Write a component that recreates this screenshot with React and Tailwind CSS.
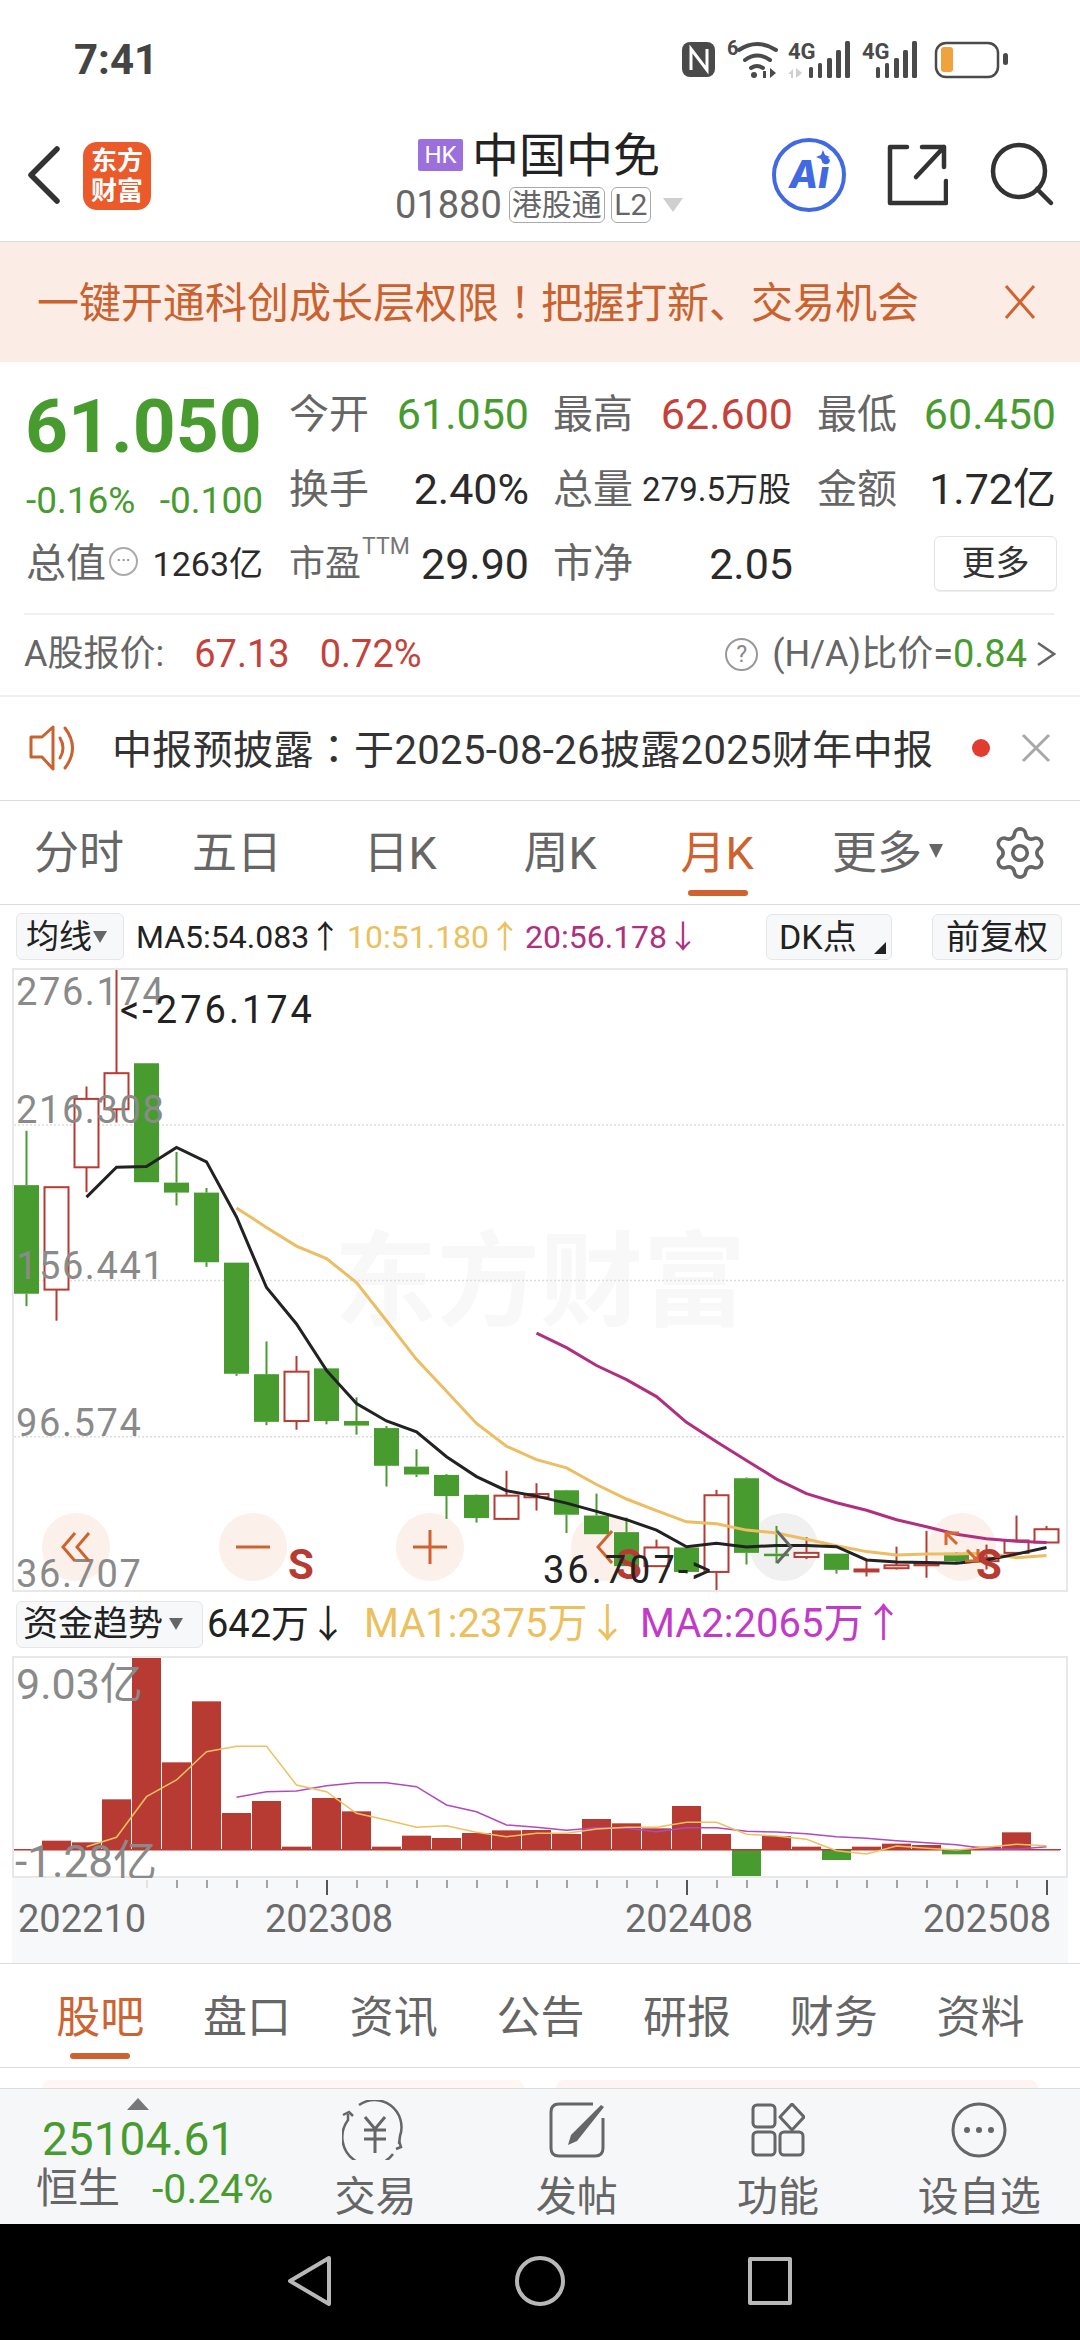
import { Settings } from 'lucide-react'

const RED = '#b83b33'
const GREEN = '#489c2f'

// candles read off the chart: [wick top, body top, body bottom, wick bottom, up?]
const candles = [
  [412, 543, 805, 835, 0], [548, 548, 795, 870, 1], [305, 335, 500, 560, 1], [20, 273, 360, 392, 1],
  [249, 249, 536, 536, 0], [463, 537, 561, 592, 0], [550, 561, 729, 740, 0], [730, 730, 998, 1003, 0],
  [920, 999, 1114, 1122, 0], [955, 993, 1112, 1133, 1], [985, 985, 1112, 1120, 0], [1055, 1112, 1123, 1145, 0],
  [1124, 1129, 1220, 1270, 0], [1180, 1222, 1241, 1247, 0], [1240, 1242, 1293, 1348, 0], [1289, 1290, 1346, 1357, 0],
  [1232, 1292, 1348, 1350, 1], [1262, 1288, 1296, 1328, 1], [1278, 1279, 1338, 1382, 0], [1287, 1340, 1385, 1385, 0],
  [1345, 1380, 1462, 1462, 0], [1398, 1417, 1462, 1462, 1], [1417, 1417, 1476, 1480, 0], [1278, 1291, 1476, 1525, 1],
  [1248, 1250, 1430, 1458, 0], [1365, 1432, 1438, 1455, 0], [1392, 1430, 1440, 1445, 1], [1432, 1432, 1471, 1480, 0],
  [1445, 1470, 1474, 1487, 1], [1415, 1460, 1467, 1470, 1], [1377, 1455, 1460, 1490, 1], [1428, 1430, 1450, 1452, 0],
  [1410, 1442, 1450, 1470, 1], [1340, 1400, 1430, 1430, 1], [1365, 1373, 1405, 1405, 1],
]

const ma5 = [[2, 572], [3, 500], [4, 498], [5, 452], [6, 487], [7, 620], [8, 790], [9, 878], [10, 990], [11, 1070], [12, 1112], [13, 1138], [14, 1198], [15, 1246], [16, 1280], [17, 1293], [18, 1310], [19, 1330], [20, 1350], [21, 1375], [22, 1415], [23, 1407], [24, 1416], [25, 1412], [26, 1412], [27, 1415], [28, 1447], [29, 1452], [30, 1453], [31, 1455], [32, 1447], [33, 1433], [34, 1417]]
const ma10 = [[7, 598], [8, 645], [9, 690], [10, 720], [11, 778], [12, 870], [13, 963], [14, 1040], [15, 1118], [16, 1173], [17, 1205], [18, 1225], [19, 1265], [20, 1300], [21, 1328], [22, 1355], [23, 1360], [24, 1375], [25, 1382], [26, 1397], [27, 1413], [28, 1427], [29, 1435], [30, 1433], [31, 1433], [32, 1430], [33, 1442], [34, 1436]]
const ma20 = [[17, 900], [18, 935], [19, 978], [20, 1012], [21, 1053], [22, 1115], [23, 1162], [24, 1207], [25, 1252], [26, 1287], [27, 1309], [28, 1327], [29, 1350], [30, 1367], [31, 1385], [32, 1396], [33, 1402], [34, 1405]]

const flowTops = [777, 752, 757, 628, 197, 517, 334, 669, 633, 770, 624, 664, 770, 737, 744, 729, 721, 720, 732, 687, 700, 715, 648, 732, 863, 738, 770, 810, 770, 761, 765, 793, 770, 727, 777]
const flowMa1 = [[2, 770], [3, 742], [4, 620], [5, 570], [6, 485], [7, 469], [8, 469], [9, 585], [10, 605], [11, 670], [12, 690], [13, 712], [14, 707], [15, 727], [16, 740], [17, 730], [18, 730], [19, 717], [20, 712], [21, 712], [22, 697], [23, 697], [24, 733], [25, 738], [26, 748], [27, 782], [28, 792], [29, 768], [30, 775], [31, 780], [32, 772], [33, 763], [34, 767]]
const flowMa2 = [[7, 622], [8, 605], [9, 603], [10, 587], [11, 578], [12, 578], [13, 590], [14, 645], [15, 665], [16, 705], [17, 712], [18, 721], [19, 713], [20, 715], [21, 725], [22, 713], [23, 713], [24, 724], [25, 726], [26, 731], [27, 740], [28, 745], [29, 752], [30, 758], [31, 764], [32, 776], [33, 778], [34, 770]]

const cx = (i) => 26.5 + 30 * i
const y1 = (z) => 960 + z / 2.412
const y2 = (z) => 1590 + z / 3
const linePts = (pts, fy) => pts.map(([i, z]) => `${cx(i)},${fy(z).toFixed(1)}`).join(' ')

const StatusIcons = () => (
  <svg width="350" height="60" viewBox="0 0 350 60" className="block">
    <rect x="12" y="12" width="33" height="35" rx="8" fill="#4a4a4a" />
    <path d="M21 40V19L37 40V19" fill="none" stroke="#fff" strokeWidth="3" />
    <text x="57" y="25" fontSize="20" fontWeight="700" fill="#4a4a4a">6</text>
    <g fill="none" stroke="#4a4a4a" strokeWidth="4" strokeLinecap="round">
      <path d="M69 20Q87 8 106 20" />
      <path d="M75 30Q87 21 100 30" />
      <path d="M81 38Q87 34 93 38" />
    </g>
    <circle cx="84" cy="45" r="3" fill="#4a4a4a" />
    <path d="M93 41h3v7h-3zM100 38l6 5-6 5z" fill="#4a4a4a" />
    <text x="118" y="29" fontSize="22" fontWeight="700" fill="#4a4a4a">4G</text>
    <path d="M118 44l5-5v9h-2v-4zM126 38l6 5-6 5z" fill="#cfcfcf" />
    <g fill="#4a4a4a">
      <rect x="139" y="37" width="4" height="11" rx="1.5" />
      <rect x="148" y="33" width="4" height="15" rx="1.5" />
      <rect x="157" y="28" width="5" height="20" rx="1.5" />
      <rect x="166" y="20" width="5" height="28" rx="1.5" />
      <rect x="175" y="11" width="5" height="37" rx="1.5" />
    </g>
    <text x="192" y="29" fontSize="22" fontWeight="700" fill="#4a4a4a">4G</text>
    <g fill="#4a4a4a">
      <rect x="206" y="37" width="4" height="11" rx="1.5" />
      <rect x="215" y="33" width="4" height="15" rx="1.5" />
      <rect x="224" y="28" width="5" height="20" rx="1.5" />
      <rect x="233" y="20" width="5" height="28" rx="1.5" />
      <rect x="242" y="11" width="5" height="37" rx="1.5" />
    </g>
    <rect x="266" y="13" width="62" height="34" rx="10" fill="none" stroke="#4a4a4a" strokeWidth="2.5" />
    <rect x="271" y="17" width="12" height="25" rx="3" fill="#f0a23c" />
    <rect x="333" y="23" width="5" height="12" rx="2.5" fill="#4a4a4a" />
  </svg>
)

const Header = () => (
  <div className="h-[122px] flex items-start border-b border-[#dcdcdc] relative">
    <svg width="36" height="60" viewBox="0 0 36 60" className="absolute left-[25px] top-[25px]">
      <path d="M32 4L6 30l26 26" fill="none" stroke="#333" strokeWidth="5.5" strokeLinecap="round" strokeLinejoin="round" />
    </svg>
    <div className="ml-[83px] mt-[22px] w-[68px] h-[68px] bg-[#ea5a2a] rounded-[14px] flex flex-col items-center justify-center text-white font-bold text-[26px] leading-[30px] shrink-0">
      <span>东方</span>
      <span>财富</span>
    </div>
    <div className="ml-[244px] mt-[14px] flex flex-col">
      <div className="flex items-center ml-[23px] h-[42px]">
        <span className="w-[45px] h-[32px] bg-[#9b6fdc] rounded-[2px] text-white text-[24px] leading-[32px] text-center">HK</span>
        <span className="ml-[9px] text-[47px] leading-none text-[#222]">中国中免</span>
      </div>
      <div className="flex items-center mt-[11px] h-[36px] text-[#666]">
        <span className="text-[38px] leading-none">01880</span>
        <span className="ml-[7px] w-[96px] h-[36px] border border-[#aaa] rounded-[6px] text-[30px] leading-[34px] text-center">港股通</span>
        <span className="ml-[6px] w-[40px] h-[36px] border border-[#aaa] rounded-[6px] text-[30px] leading-[34px] text-center">L2</span>
        <svg width="20" height="14" viewBox="0 0 20 14" className="ml-[12px]">
          <path d="M0 0h20L10 14z" fill="#cfcfcf" />
        </svg>
      </div>
    </div>
    <div className="absolute left-[772px] top-[18px] w-[74px] h-[74px] rounded-full border-[4px] border-[#4169e1] flex items-center justify-center">
      <span className="text-[#4169e1] text-[38px] leading-none font-extrabold italic font-['Inter',sans-serif] -mt-[2px]">Ai</span>
      <svg width="14" height="14" viewBox="0 0 14 14" className="absolute left-[40px] top-[8px]">
        <path d="M7 0l2 5 5 2-5 2-2 5-2-5-5-2 5-2z" fill="#4169e1" />
      </svg>
    </div>
    <svg width="64" height="64" viewBox="0 0 64 64" className="absolute left-[884px] top-[23px]" fill="none" stroke="#333" strokeWidth="4.5" strokeLinecap="round" strokeLinejoin="round">
      <path d="M23 4H6v56h56V38" />
      <path d="M32 34L60 4M38 4h22v20" />
    </svg>
    <svg width="66" height="66" viewBox="0 0 66 66" className="absolute left-[990px] top-[22px]" fill="none" stroke="#333" strokeWidth="4.5" strokeLinecap="round">
      <circle cx="29" cy="29" r="26" />
      <path d="M47 47l14 14" />
    </svg>
  </div>
)

const Label = ({ children }) => <span className="text-[40px] leading-none text-[#666]">{children}</span>
const Value = ({ children, className = 'text-[#2a2a2a]' }) => <span className={`text-[43px] leading-none -mr-[2px] ${className}`}>{children}</span>
const Cell = ({ children }) => <div className="flex items-center justify-between">{children}</div>
const JP = ({ children }) => <span className="font-['Noto_Sans_CJK_JP',sans-serif]">{children}</span>

const Quote = () => (
  <div className="px-[26px] pt-[15px] h-[251px]">
    <div className="grid grid-cols-[237px_238px_238px_237px] gap-x-[26px] grid-rows-[75px_75px_74px] h-[224px]">
      <div className="flex items-center pt-[24px] -ml-[1px] text-[75px] font-bold leading-none text-[#489c2f]">61.050</div>
      <Cell><Label>今开</Label><Value className="text-[#489c2f]">61.050</Value></Cell>
      <Cell><Label>最高</Label><Value className="text-[#c4423a]">62.600</Value></Cell>
      <Cell><Label>最低</Label><Value className="text-[#489c2f]">60.450</Value></Cell>

      <div className="flex items-center justify-between pt-[22px] text-[37px] leading-none text-[#489c2f]">
        <span>-0.16%</span>
        <span>-0.100</span>
      </div>
      <Cell><Label>换手</Label><Value>2.40%</Value></Cell>
      <Cell>
        <Label>总量</Label>
        <span className="text-[33px] leading-none text-[#2a2a2a]">279.5万股</span>
      </Cell>
      <Cell><Label>金额</Label><Value>1.72亿</Value></Cell>

      <Cell>
        <span className="flex items-center">
          <Label>总值</Label>
          <span className="ml-[3px] -mt-[6px] w-[29px] h-[29px] rounded-full border-2 border-[#aaa] flex items-center justify-center text-[#888] text-[18px] leading-none">···</span>
        </span>
        <span className="text-[34px] leading-none text-[#2a2a2a]">1263亿</span>
      </Cell>
      <Cell>
        <span className="flex items-center">
          <span className="text-[36px] leading-none text-[#666]">市盈</span>
          <span className="text-[23px] leading-none text-[#777] -mt-[36px] ml-[1px]">TTM</span>
        </span>
        <Value>29.90</Value>
      </Cell>
      <Cell><Label>市净</Label><Value>2.05</Value></Cell>
      <div className="flex items-center justify-end -mt-[2px] -mr-[3px]">
        <span className="w-[123px] h-[55px] border border-[#e3e3e3] rounded-[6px] text-[34px] leading-[52px] text-center text-[#333] shadow-[0_1px_1px_#eee]">更多</span>
      </div>
    </div>
    <div className="border-t-2 border-[#f0f0f0] -ml-[2px] mt-[12px]" />
  </div>
)

const AShare = () => (
  <div className="h-[84px] flex items-center px-[24px] border-b-2 border-[#f0f0f0]">
    <span className="text-[36px] leading-none text-[#666]">A股报价:</span>
    <span className="ml-[30px] text-[38px] leading-none text-[#c4423a]">67.13</span>
    <span className="ml-[30px] text-[38px] leading-none text-[#c4423a]">0.72%</span>
    <span className="ml-auto w-[33px] h-[33px] rounded-full border-2 border-[#999] text-[#888] text-[23px] leading-[29px] text-center">?</span>
    <span className="ml-[14px] text-[36px] leading-none text-[#666]">(H/A)比价=</span>
    <span className="text-[38px] leading-none text-[#489c2f]">0.84</span>
    <svg width="20" height="26" viewBox="0 0 20 26" className="ml-[9px]">
      <path d="M2 2l16 11L2 24" fill="none" stroke="#666" strokeWidth="2.5" />
    </svg>
  </div>
)

const Notice = () => (
  <div className="h-[104px] flex items-start pt-[27px] pl-[29px] border-b border-[#dcdcdc]">
    <svg width="52" height="46" viewBox="0 0 52 46" fill="none" stroke="#c9622e" strokeWidth="3" strokeLinejoin="round" strokeLinecap="round" className="mt-[1px]">
      <path d="M2 12h11L24 2v42L13 32H2z" />
      <path d="M31 13q6 10 0 20" />
      <path d="M36 3q15 20 0 40" />
    </svg>
    <span className="ml-[31px] text-[40px] leading-[46px] tracking-[0.35px] text-[#333] whitespace-nowrap">中报预披露<JP>：</JP>于2025-08-26披露2025财年中报</span>
    <span className="ml-[39px] mt-[15px] w-[18px] h-[18px] rounded-full bg-[#e23c31] shrink-0" />
    <svg width="30" height="30" viewBox="0 0 30 30" className="ml-[31px] mt-[9px] shrink-0">
      <path d="M2 2l26 26M28 2L2 28" stroke="#a8a8a8" strokeWidth="3" />
    </svg>
  </div>
)

const periodTab = 'relative h-full flex items-center justify-center text-[45px] leading-none pt-[2px]'

const PeriodTabs = () => (
  <div className="h-[104px] flex border-b border-[#dcdcdc] text-[#666]">
    <div className={`${periodTab} w-[158px]`}>分时</div>
    <div className={`${periodTab} w-[158px]`}>五日</div>
    <div className={`${periodTab} w-[168px]`}>日K</div>
    <div className={`${periodTab} w-[152px]`}>周K</div>
    <div className={`${periodTab} w-[162px] text-[#cf6330]`}>
      月K
      <span className="absolute left-[52px] bottom-[8px] w-[60px] h-[6px] rounded-full bg-[#cf6330]" />
    </div>
    <div className={`${periodTab} w-[158px]`}>
      更多
      <svg width="14" height="22" viewBox="0 0 14 22" className="absolute left-[131px] top-[39px]">
        <path d="M0 4h14L7 18z" fill="#666" />
      </svg>
    </div>
    <div className="w-[124px] h-full flex items-center justify-center">
      <Settings size={58} strokeWidth={1.5} color="#666" className="ml-[3px]" />
    </div>
  </div>
)

const chipBox = 'border border-[#e6e6e6] rounded-[6px] bg-[#f7f8fa] text-[#222] flex items-center leading-none'

const MaRow = () => (
  <div className="h-[63px] flex items-center pl-[16px] text-[32px] leading-none whitespace-nowrap">
    <div className={`${chipBox} w-[108px] h-[47px] pl-[9px] text-[33px]`}>
      均线
      <svg width="14" height="16" viewBox="0 0 14 16" className="ml-[1px]">
        <path d="M0 2h14L7 14z" fill="#666" />
      </svg>
    </div>
    <span className="ml-[12px] text-[#222] w-[211px]">MA5:54.083↑</span>
    <span className="text-[#ecc05c] w-[178px]">10:51.180↑</span>
    <span className="text-[#b0307f] w-[241px]">20:56.178↓</span>
    <div className={`${chipBox} w-[126px] h-[46px] pl-[12px] text-[34px] relative`}>
      DK点
      <svg width="12" height="12" viewBox="0 0 12 12" className="absolute right-[5px] bottom-[5px]">
        <path d="M12 0v12H0z" fill="#222" />
      </svg>
    </div>
    <div className={`${chipBox} ml-[40px] w-[130px] h-[46px] justify-center text-[34px]`}>前复权</div>
  </div>
)

const roundBg = 'absolute w-[68px] h-[68px] rounded-full top-[543px]'
const roundIcon = 'absolute w-[68px] h-[68px] top-[543px] flex items-center justify-center'
const axisNum = 'absolute text-[38px] leading-none tracking-[1.6px] text-[#8a8a8a]'
const markNum = 'absolute text-[38px] leading-none tracking-[3px] text-[#222]'
const signal = 'absolute top-[574px] text-[42px] leading-none font-bold text-[#b83b33]'

const MainChart = () => (
  <div className="relative mx-[12px] h-[624px] border-2 border-[#e8e8e8]">
    <div className="absolute left-[320px] top-[261px] text-[103px] font-bold leading-[103px] text-[#f8f8f8] whitespace-nowrap">东方财富</div>
    <div className={`${roundBg} left-[28px] bg-[#fbf0ea]`} />
    <div className={`${roundBg} left-[205px] bg-[#fbf0ea]`} />
    <div className={`${roundBg} left-[382px] bg-[#fbf0ea]`} />
    <div className={`${roundBg} left-[557px] bg-[#fbf0ea]`} />
    <div className={`${roundBg} left-[736px] bg-[#f0f0f0]`} />
    <div className={`${roundBg} left-[914px] bg-[#fbf0ea]`} />

    <svg viewBox="14 970 1052 620" className="absolute inset-0 w-full h-full">
      {[1125, 1280.5, 1436.8].map((y) => (
        <line key={y} x1="14" x2="1066" y1={y} y2={y} stroke="#dedede" strokeWidth="1.5" strokeDasharray="2 2" />
      ))}
      {candles.map(([wt, bt, bb, wb, up], i) => {
        const c = up ? RED : GREEN
        const x = cx(i)
        return (
          <g key={i}>
            <line x1={x} x2={x} y1={y1(wt)} y2={y1(bt)} stroke={c} strokeWidth="2" />
            <line x1={x} x2={x} y1={y1(bb)} y2={y1(wb)} stroke={c} strokeWidth="2" />
            {up ? (
              <rect x={x - 12} y={y1(bt)} width="24" height={Math.max(y1(bb) - y1(bt), 2)} fill="#fff" stroke={c} strokeWidth="2" />
            ) : (
              <rect x={x - 12.5} y={y1(bt)} width="25" height={y1(bb) - y1(bt)} fill={c} />
            )}
          </g>
        )
      })}
      <polyline points={linePts(ma20, y1)} fill="none" stroke="#b0307f" strokeWidth="3" />
      <polyline points={linePts(ma10, y1)} fill="none" stroke="#ecbd62" strokeWidth="3" />
      <polyline points={linePts(ma5, y1)} fill="none" stroke="#222" strokeWidth="3" />
    </svg>

    <span className={`${axisNum} left-[2px] top-[3px]`}>276.174</span>
    <span className={`${axisNum} left-[2px] top-[121px]`}>216.308</span>
    <span className={`${axisNum} left-[2px] top-[277px]`}>156.441</span>
    <span className={`${axisNum} left-[2px] top-[434px]`}>96.574</span>
    <span className={`${axisNum} left-[2px] top-[585px]`}>36.707</span>
    <span className={`${markNum} left-[106px] top-[21px]`}>&lt;-276.174</span>

    <div className={`${roundIcon} left-[28px]`}>
      <svg width="30" height="32" viewBox="0 0 30 32" fill="none" stroke="#cf6330" strokeWidth="3">
        <path d="M14 2L2 16l12 14M28 2L16 16l12 14" />
      </svg>
    </div>
    <div className={`${roundIcon} left-[205px]`}>
      <svg width="34" height="4" viewBox="0 0 34 4"><path d="M0 2h34" stroke="#cf6330" strokeWidth="3" /></svg>
    </div>
    <div className={`${roundIcon} left-[382px]`}>
      <svg width="34" height="34" viewBox="0 0 34 34"><path d="M0 17h34M17 0v34" stroke="#cf6330" strokeWidth="3" /></svg>
    </div>
    <div className={`${roundIcon} left-[557px]`}>
      <svg width="18" height="34" viewBox="0 0 18 34" fill="none" stroke="#cf6330" strokeWidth="3"><path d="M16 1L2 17l14 16" /></svg>
    </div>
    <div className={`${roundIcon} left-[736px]`}>
      <svg width="18" height="34" viewBox="0 0 18 34" fill="none" stroke="#666" strokeWidth="3"><path d="M2 1l14 16L2 33" /></svg>
    </div>
    <div className={`${roundIcon} left-[914px]`}>
      <svg width="36" height="32" viewBox="0 0 36 32" fill="none" stroke="#d9672f" strokeWidth="3">
        <path d="M2 14V2h13M2 2l11 11M34 18v12H21M34 30L23 19" />
      </svg>
    </div>

    <span className={`${signal} left-[274px]`}>S</span>
    <span className={`${signal} left-[602px]`}>S</span>
    <span className={`${signal} left-[962px]`}>S</span>
    <span className={`${markNum} left-[529px] top-[581px]`}>36.707-&gt;</span>
  </div>
)

const FlowRow = () => (
  <div className="h-[64px] flex items-center pl-[16px] text-[40px] leading-none whitespace-nowrap">
    <div className={`${chipBox} w-[187px] h-[47px] pl-[6px] text-[35px]`}>
      资金趋势
      <svg width="14" height="16" viewBox="0 0 14 16" className="ml-[6px]">
        <path d="M0 2h14L7 14z" fill="#666" />
      </svg>
    </div>
    <span className="ml-[4px] w-[157px] text-[#222] text-[38px]">642万↓</span>
    <span className="w-[276px] text-[#ecc05c]">MA1:2375万↓</span>
    <span className="text-[#c23ac8]">MA2:2065万↑</span>
  </div>
)

const FlowChart = () => (
  <div className="relative mx-[12px] h-[222px] border-2 border-[#e8e8e8]">
    <svg viewBox="14 1658 1052 218" className="absolute inset-0 w-full h-full">
      {flowTops.map((t, i) => {
        const up = t < 780
        const top = up ? y2(t) : y2(780)
        const h = up ? y2(780) - y2(t) : y2(t) - y2(780)
        return <rect key={i} x={cx(i) - 14.5} y={top} width="29" height={h} fill={up ? RED : GREEN} />
      })}
      <line x1="12" x2="1060" y1={y2(779.5)} y2={y2(779.5)} stroke={RED} strokeWidth="1.5" />
      <polyline points={linePts(flowMa2, y2)} fill="none" stroke="#b04ac0" strokeWidth="1.5" />
      <polyline points={linePts(flowMa1, y2)} fill="none" stroke="#efc060" strokeWidth="1.5" />
    </svg>
    <span className="absolute left-[2px] top-[5px] text-[43px] leading-none text-[#8a8a8a]">9.03亿</span>
    <span className="absolute left-[1px] top-[182px] text-[44px] leading-none text-[#8a8a8a]">-1.28亿</span>
  </div>
)

const DateAxis = () => (
  <div className="relative h-[85px] mx-[12px] bg-[#f7f8fa]">
    <svg viewBox="12 1878 1056 20" className="block w-full h-[20px]">
      <line x1="147" x2="147" y1="1880" y2="1888" stroke="#ddd" strokeWidth="1.5" />
      {Array.from({ length: 29 }, (_, i) => 177 + 30 * i).map((x) => (
        <line key={x} x1={x} x2={x} y1="1880" y2="1888" stroke="#888" strokeWidth="1.5" />
      ))}
      {[327, 687, 1047].map((x) => (
        <line key={x} x1={x} x2={x} y1="1880" y2="1895" stroke="#555" strokeWidth="2" />
      ))}
    </svg>
    <div className="flex text-[38px] leading-none text-[#6b6b6b] mt-[2px]">
      <span className="ml-[6px] w-[247px]">202210</span>
      <span className="w-[360px]">202308</span>
      <span className="w-[298px]">202408</span>
      <span>202508</span>
    </div>
  </div>
)

const newsTabs = ['股吧', '盘口', '资讯', '公告', '研报', '财务', '资料']

const NewsTabs = () => (
  <div className="h-[105px] flex pl-[27px] border-y border-[#dcdcdc]">
    {newsTabs.map((t, i) => (
      <div key={t} className={`relative w-[146.7px] h-full flex items-center justify-center text-[44px] leading-none pt-[4px] ${i === 0 ? 'text-[#cf6330]' : 'text-[#666]'}`}>
        {t}
        {i === 0 && <span className="absolute left-[43px] bottom-[8px] w-[60px] h-[6px] rounded-full bg-[#cf6330]" />}
      </div>
    ))}
  </div>
)

const Peek = () => (
  <div className="h-[20px] flex items-end gap-[32px] px-[42px]">
    <div className="w-[486px] h-[8px] rounded-t-[14px] bg-[#fef7f4]" />
    <div className="w-[486px] h-[8px] rounded-t-[14px] bg-[#fef5f2]" />
  </div>
)

const BarItem = ({ icon, label }) => (
  <div className="w-[201.5px] flex flex-col items-center">
    <div className="h-[64px] mt-[9px] flex items-center justify-center">{icon}</div>
    <span className="mt-[15px] text-[41px] leading-none text-[#666]">{label}</span>
  </div>
)

const BottomBar = () => (
  <div className="h-[136px] bg-[#f6f7f9] border-t border-[#dcdcdc] flex">
    <div className="w-[275px] relative">
      <svg width="22" height="12" viewBox="0 0 22 12" className="absolute left-[127px] top-[9px]">
        <path d="M11 0l11 12H0z" fill="#777" />
      </svg>
      <div className="absolute left-[42px] top-[27px] text-[46px] leading-none text-[#489c2f]">25104.61</div>
      <div className="absolute left-[36px] top-[79px] flex items-center">
        <span className="text-[42px] leading-none text-[#666]">恒生</span>
        <span className="ml-[32px] text-[41px] leading-none text-[#489c2f]">-0.24%</span>
      </div>
    </div>
    <BarItem
      label="交易"
      icon={
        <svg width="66" height="60" viewBox="0 0 66 60" fill="none" stroke="#666" strokeWidth="2.5">
          <path d="M17 5A27 27 0 0 1 58 36l-1 8" />
          <path d="M51 54A27 27 0 0 1 6 20l0-6" />
          <path d="M1 15l6-3 4 4M54 49l5-2-2-6" />
          <path d="M23 17l10 12 10-12M22 30h22M22 39h22M33 29v24" strokeWidth="3" />
        </svg>
      }
    />
    <BarItem
      label="发帖"
      icon={
        <svg width="56" height="56" viewBox="0 0 56 56" fill="none" stroke="#666" strokeWidth="3">
          <path d="M44 2H10Q2 2 2 10V46Q2 54 10 54H46Q54 54 54 46V16" />
          <path d="M52 3l3 2-27 34-9 4 3-10z" fill="#666" stroke="none" />
        </svg>
      }
    />
    <BarItem
      label="功能"
      icon={
        <svg width="54" height="54" viewBox="0 0 54 54" fill="none" stroke="#666" strokeWidth="3">
          <rect x="2" y="2" width="22" height="22" rx="4" />
          <path d="M41 1l12 13-12 13-12-13z" strokeLinejoin="round" />
          <rect x="2" y="29" width="22" height="23" rx="4" />
          <rect x="29" y="29" width="23" height="23" rx="4" />
        </svg>
      }
    />
    <BarItem
      label="设自选"
      icon={
        <svg width="56" height="56" viewBox="0 0 56 56" fill="none" stroke="#666" strokeWidth="3">
          <circle cx="28" cy="28" r="26" />
          <g fill="#666" stroke="none">
            <circle cx="16" cy="28" r="3" />
            <circle cx="28" cy="28" r="3" />
            <circle cx="40" cy="28" r="3" />
          </g>
        </svg>
      }
    />
  </div>
)

const NavBar = () => (
  <div className="h-[116px] bg-black flex items-center justify-center gap-[181px] pb-[2px]">
    <svg width="46" height="52" viewBox="0 0 46 52" fill="none" stroke="#b8b8b8" strokeWidth="4" strokeLinejoin="round">
      <path d="M42 3L3 26l39 23z" />
    </svg>
    <svg width="52" height="52" viewBox="0 0 52 52" fill="none" stroke="#b8b8b8" strokeWidth="4">
      <circle cx="26" cy="26" r="23" />
    </svg>
    <svg width="46" height="50" viewBox="0 0 46 50" fill="none" stroke="#b8b8b8" strokeWidth="4" strokeLinejoin="round">
      <rect x="3" y="3" width="40" height="44" />
    </svg>
  </div>
)

export default function App() {
  return (
    <div className="w-[1080px] h-[2340px] bg-white overflow-hidden font-['Roboto','Noto_Sans_CJK_SC',sans-serif]">
      <div className="h-[120px] flex items-start relative">
        <span className="ml-[74px] mt-[39px] text-[42px] leading-none font-bold text-[#444]">7:41</span>
        <div className="absolute left-[670px] top-[30px]">
          <StatusIcons />
        </div>
      </div>
      <Header />
      <div className="h-[120px] bg-[#fbece5] flex items-center pl-[37px] relative">
        <span className="text-[42px] leading-none text-[#c9622e] whitespace-nowrap">一键开通科创成长层权限<JP>！</JP>把握打新、交易机会</span>
        <svg width="32" height="36" viewBox="0 0 32 36" className="absolute left-[1004px] top-[42px]">
          <path d="M2 2l28 32M30 2L2 34" stroke="#d2622f" strokeWidth="3" />
        </svg>
      </div>
      <Quote />
      <AShare />
      <Notice />
      <PeriodTabs />
      <MaRow />
      <MainChart />
      <FlowRow />
      <FlowChart />
      <DateAxis />
      <NewsTabs />
      <Peek />
      <BottomBar />
      <NavBar />
    </div>
  )
}
